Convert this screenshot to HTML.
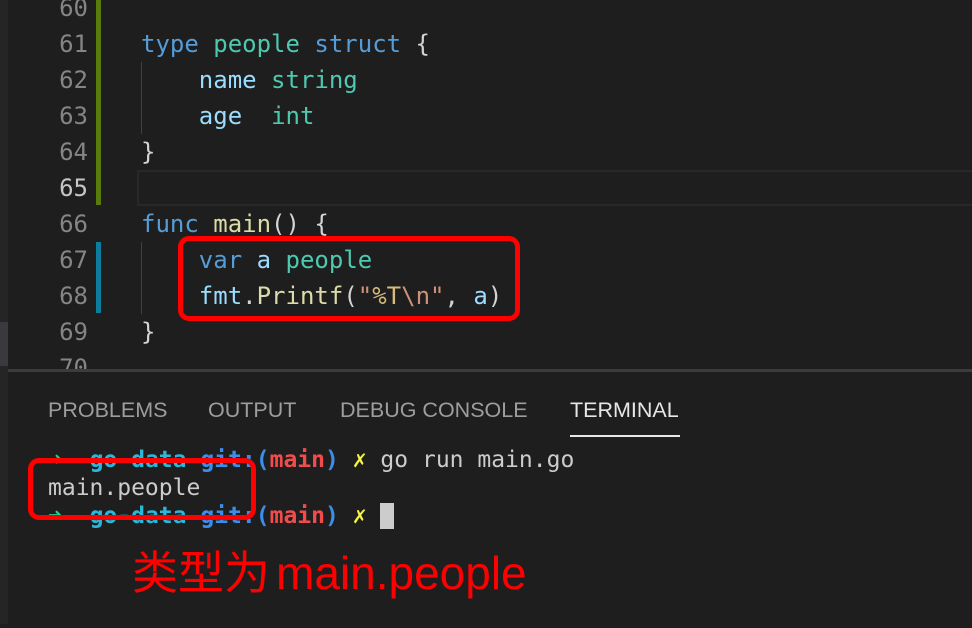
<!DOCTYPE html>
<html><head><meta charset="utf-8"><style>
body{margin:0;width:972px;height:624px;background:#1e1e1e;overflow:hidden;position:relative;font-family:"DejaVu Sans Mono","Liberation Mono",monospace}
.a{position:absolute}
.ln{position:absolute;left:20px;width:68px;text-align:right;color:#858585;font-size:24px;line-height:36px}
.code{position:absolute;left:141px;font-size:24px;line-height:36px;white-space:pre;color:#d4d4d4}
.k{color:#569cd6}.t{color:#4ec9b0}.v{color:#9cdcfe}.f{color:#dcdcaa}.s{color:#ce9178}.e{color:#d7ba7d}
.tab{position:absolute;top:398px;font-family:"Liberation Sans",sans-serif;font-size:21.5px;color:#9d9d9d}
.term{position:absolute;left:48px;font-size:23px;line-height:28px;white-space:pre;color:#cccccc}
</style></head><body>
<div class="a" style="left:0;top:0;width:8px;height:624px;background:#252526"></div>
<div class="a" style="left:0;top:322px;width:8px;height:44px;background:#3a3a3e"></div>
<div class="a" style="left:96px;top:0;width:5px;height:205px;background:#587c0c"></div>
<div class="a" style="left:96px;top:242px;width:5px;height:71px;background:#0c7d9d"></div>
<div class="a" style="left:137px;top:170px;width:840px;height:32px;border:2px solid #282828"></div>
<div class="a" style="left:141px;top:62px;width:1px;height:72px;background:#404040"></div>
<div class="a" style="left:141px;top:242px;width:1px;height:72px;background:#404040"></div>
<div class="ln" style="top:-10px">60</div>
<div class="ln" style="top:26px">61</div>
<div class="ln" style="top:62px">62</div>
<div class="ln" style="top:98px">63</div>
<div class="ln" style="top:134px">64</div>
<div class="ln" style="top:170px;color:#c6c6c6">65</div>
<div class="ln" style="top:206px">66</div>
<div class="ln" style="top:242px">67</div>
<div class="ln" style="top:278px">68</div>
<div class="ln" style="top:314px">69</div>
<div class="ln" style="top:350px">70</div>
<div class="code" style="top:26px"><span class="k">type</span> <span class="t">people</span> <span class="k">struct</span> {</div>
<div class="code" style="top:62px">    <span class="v">name</span> <span class="t">string</span></div>
<div class="code" style="top:98px">    <span class="v">age</span>  <span class="t">int</span></div>
<div class="code" style="top:134px">}</div>
<div class="code" style="top:206px"><span class="k">func</span> <span class="f">main</span>() {</div>
<div class="code" style="top:242px">    <span class="k">var</span> <span class="v">a</span> <span class="t">people</span></div>
<div class="code" style="top:278px">    <span class="v">fmt</span>.<span class="f">Printf</span>(<span class="s">"</span><span class="e">%T</span><span class="s">\n"</span>, <span class="v">a</span>)</div>
<div class="code" style="top:314px">}</div>
<div class="a" style="left:8px;top:369px;width:964px;height:256px;background:#1e1e1e;border-top:3px solid #3c3c3c"></div>
<div class="tab" style="left:48px">PROBLEMS</div>
<div class="tab" style="left:208px">OUTPUT</div>
<div class="tab" style="left:340px">DEBUG CONSOLE</div>
<div class="tab" style="left:570px;color:#e7e7e7">TERMINAL</div>
<div class="a" style="left:570px;top:435px;width:110px;height:2px;background:#e7e7e7"></div>
<div class="term" style="top:446px"><span style="color:#23d18b">➜</span>  <b style="color:#29b8db">go-data</b> <b style="color:#3b8eea">git:(</b><b style="color:#f14c4c">main</b><b style="color:#3b8eea">)</b> <b style="color:#f5f543">✗</b> go run main.go</div>
<div class="term" style="top:474px">main.people</div>
<div class="term" style="top:502px"><span style="color:#23d18b">➜</span>  <b style="color:#29b8db">go-data</b> <b style="color:#3b8eea">git:(</b><b style="color:#f14c4c">main</b><b style="color:#3b8eea">)</b> <b style="color:#f5f543">✗</b> <span style="background:#ccc"> </span></div>
<div class="a" style="left:178px;top:236px;width:332px;height:75px;border:5px solid #f00;border-radius:11px"></div>
<div class="a" style="left:28px;top:458px;width:218px;height:52px;border:5px solid #f00;border-radius:11px"></div>
<div class="a" style="left:132px;top:543px;color:#f00;font-size:46px;font-family:'Liberation Sans','Noto Sans CJK SC',sans-serif;line-height:60px;white-space:nowrap">类型为<span style="margin-left:6px">main.people</span></div>
</body></html>
